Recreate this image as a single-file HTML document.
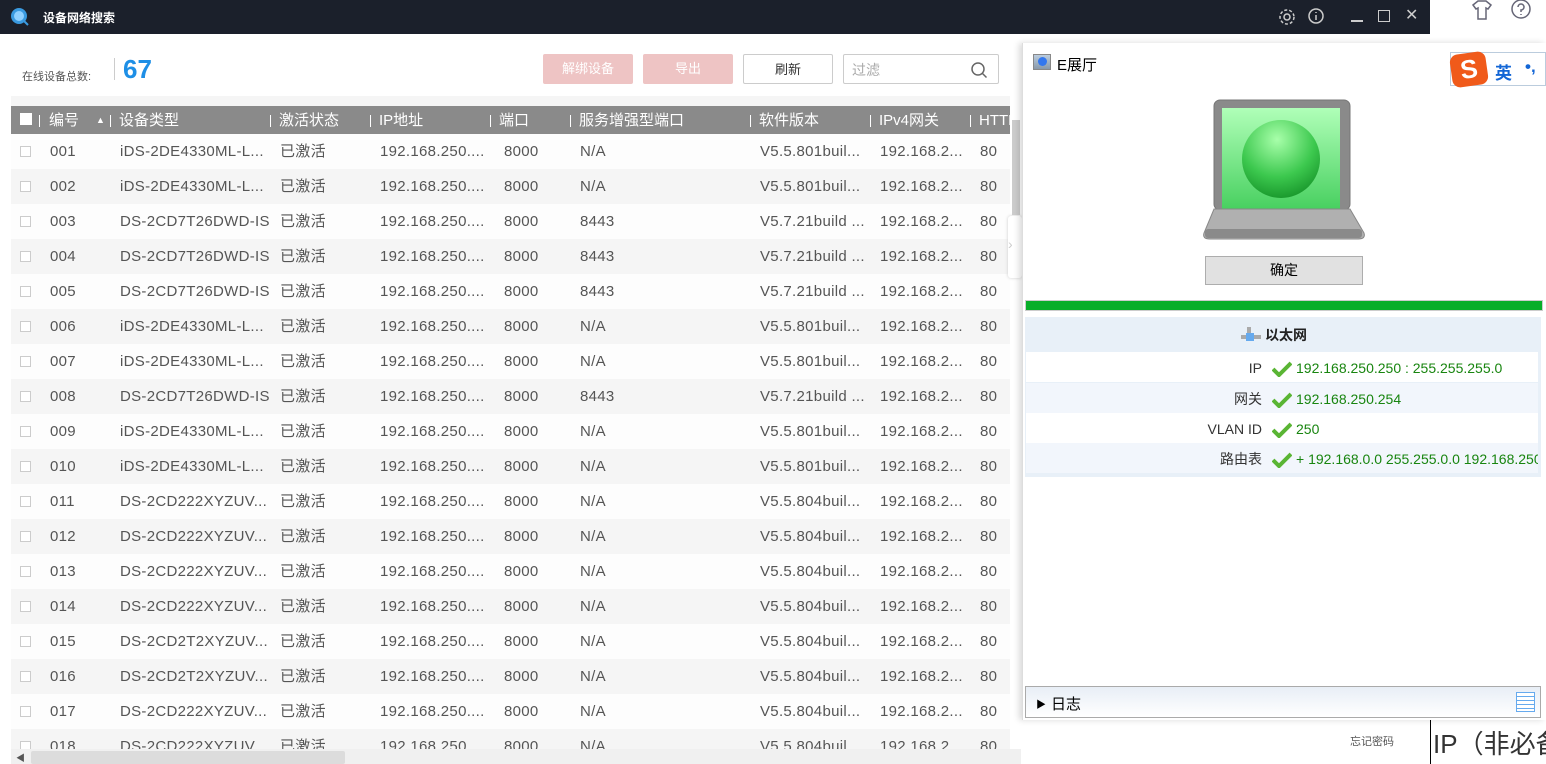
<!DOCTYPE html>
<html><head><meta charset="utf-8"><style>
*{margin:0;padding:0;box-sizing:border-box}
body{width:1546px;height:764px;overflow:hidden;background:#fff;position:relative;font-family:"Liberation Sans","Noto Sans CJK SC",sans-serif;}
.abs{position:absolute}
.title{left:0;top:0;width:1430px;height:34px;background:#1b202b}
.rt{left:1430px;top:0;width:116px;height:44px;background:#fff}
.hdr{left:11px;top:106px;width:999px;height:28px;background:#8a8a8a;color:#fff;font-size:15px}
.hdr span{position:absolute;top:5px;line-height:20px}
.row{position:absolute;left:11px;width:999px;height:35px;font-size:15px;color:#555;letter-spacing:.3px}
.row span{position:absolute;top:8px;line-height:20px;height:20px;white-space:nowrap}
.cb{position:absolute;left:9px;top:12px;width:11px;height:11px;border:1px solid #ccc;background:#fff}
.sep{position:absolute;top:8px;width:1px;height:13px;background:#eee}
.btn{position:absolute;top:54px;height:30px;font-size:13px;text-align:center;line-height:30px;border-radius:2px}
.pop{left:1022px;top:43px;width:524px;height:677px;background:#fff;box-shadow:-3px 0 6px rgba(0,0,0,.15);border-left:1px solid #ddd}
.kv{position:absolute;left:3px;width:512px;height:30px;font-size:14px}
.kv .k{position:absolute;right:276px;top:8px;line-height:16px;color:#333;text-align:right}
.kv .v{position:absolute;left:270px;top:8px;line-height:16px;color:#18850f;white-space:nowrap}
.kv svg{position:absolute;left:246px;top:9px}
</style></head><body>
<div class="abs title">
 <svg class="abs" style="left:10px;top:7px" width="20" height="20"><circle cx="9" cy="9" r="8" fill="#3a9ae0"/><circle cx="9" cy="9" r="5" fill="#8fd0ff"/><path d="M14 14l4 4" stroke="#3a9ae0" stroke-width="2"/></svg>
 <div class="abs" style="left:43px;top:9px;color:#fff;font-size:12px;font-weight:bold">设备网络搜索</div>
 <svg class="abs" style="left:1277px;top:7px" width="20" height="20" fill="none" stroke="#ccc" stroke-width="1.5"><circle cx="10" cy="10" r="3"/><circle cx="10" cy="10" r="7" stroke-dasharray="3 2"/></svg>
 <svg class="abs" style="left:1307px;top:7px" width="18" height="18" fill="none" stroke="#ccc" stroke-width="1.5"><circle cx="9" cy="9" r="7"/><path d="M9 8v5M9 5v1"/></svg>
 <div class="abs" style="left:1351px;top:20px;width:12px;height:1.5px;background:#ccc"></div>
 <div class="abs" style="left:1378px;top:10px;width:12px;height:12px;border:1.5px solid #ccc"></div>
 <div class="abs" style="left:1405px;top:5px;color:#ccc;font-size:16px">✕</div>
</div>
<div class="abs rt">
 <svg class="abs" style="left:40px;top:0" width="24" height="20" fill="none" stroke="#667" stroke-width="1.5"><path d="M3 5l5-4h8l5 4-3 4-2-1v11H8V8L6 9z"/></svg>
 <svg class="abs" style="left:80px;top:0" width="22" height="20" fill="none" stroke="#667" stroke-width="1.5"><circle cx="11" cy="9" r="9"/><path d="M8 7a3 3 0 1 1 3 3v2M11 14v1"/></svg>
</div>
<div class="abs" style="left:22px;top:68px;font-size:11px;color:#555">在线设备总数:</div>
<div class="abs" style="left:114px;top:58px;width:1px;height:22px;background:#ccc"></div>
<div class="abs" style="left:123px;top:54px;font-size:26px;font-weight:bold;color:#1e8fe6">67</div>
<div class="btn" style="left:543px;width:90px;background:#eec4c4;color:#fff">解绑设备</div>
<div class="btn" style="left:643px;width:90px;background:#eec4c4;color:#fff">导出</div>
<div class="btn" style="left:743px;width:90px;border:1px solid #ccc;color:#333">刷新</div>
<div class="btn" style="left:843px;width:156px;border:1px solid #ccc;color:#aaa;text-align:left;padding-left:8px;font-size:14px">过滤
 <svg class="abs" style="right:10px;top:6px" width="18" height="18" fill="none" stroke="#666" stroke-width="1.5"><circle cx="8" cy="8" r="6"/><path d="M12.5 12.5l4 4"/></svg></div>
<div class="abs" style="left:11px;top:96px;width:999px;height:10px;background:#f5f5f5"></div>
<div class="abs hdr">
 <div class="abs" style="left:9px;top:7px;width:12px;height:12px;background:#fff"></div>
 <span class="sep" style="left:28px;background:#fff;top:9px;height:12px"></span><span style="left:38px">编号</span><span style="left:85px;font-size:9px;top:4px">▲</span>
 <span class="sep" style="left:99px;background:#fff;top:9px;height:12px"></span><span style="left:108px">设备类型</span>
 <span class="sep" style="left:259px;background:#fff;top:9px;height:12px"></span><span style="left:268px">激活状态</span>
 <span class="sep" style="left:359px;background:#fff;top:9px;height:12px"></span><span style="left:368px">IP地址</span>
 <span class="sep" style="left:479px;background:#fff;top:9px;height:12px"></span><span style="left:488px">端口</span>
 <span class="sep" style="left:559px;background:#fff;top:9px;height:12px"></span><span style="left:568px">服务增强型端口</span>
 <span class="sep" style="left:739px;background:#fff;top:9px;height:12px"></span><span style="left:748px">软件版本</span>
 <span class="sep" style="left:859px;background:#fff;top:9px;height:12px"></span><span style="left:868px">IPv4网关</span>
 <span class="sep" style="left:959px;background:#fff;top:9px;height:12px"></span><span style="left:968px">HTTP</span>
</div>
<div id="rows"></div>
<script>
var d=[["iDS-2DE4330ML-L...","N/A","V5.5.801buil..."],["iDS-2DE4330ML-L...","N/A","V5.5.801buil..."],["DS-2CD7T26DWD-IS","8443","V5.7.21build ..."],["DS-2CD7T26DWD-IS","8443","V5.7.21build ..."],["DS-2CD7T26DWD-IS","8443","V5.7.21build ..."],["iDS-2DE4330ML-L...","N/A","V5.5.801buil..."],["iDS-2DE4330ML-L...","N/A","V5.5.801buil..."],["DS-2CD7T26DWD-IS","8443","V5.7.21build ..."],["iDS-2DE4330ML-L...","N/A","V5.5.801buil..."],["iDS-2DE4330ML-L...","N/A","V5.5.801buil..."],["DS-2CD222XYZUV...","N/A","V5.5.804buil..."],["DS-2CD222XYZUV...","N/A","V5.5.804buil..."],["DS-2CD222XYZUV...","N/A","V5.5.804buil..."],["DS-2CD222XYZUV...","N/A","V5.5.804buil..."],["DS-2CD2T2XYZUV...","N/A","V5.5.804buil..."],["DS-2CD2T2XYZUV...","N/A","V5.5.804buil..."],["DS-2CD222XYZUV...","N/A","V5.5.804buil..."],["DS-2CD222XYZUV...","N/A","V5.5.804buil..."]];
var h="";d.forEach(function(r,i){var n=("00"+(i+1)).slice(-3);h+='<div class="row" style="top:'+(134+35*i)+'px;background:'+(i%2?'#f5f5f5':'#fdfdfd')+'"><div class="cb"></div><span style="left:39px">'+n+'</span><span style="left:109px">'+r[0]+'</span><span style="left:269px">已激活</span><span style="left:369px">192.168.250....</span><span style="left:493px">8000</span><span style="left:569px">'+r[1]+'</span><span style="left:749px">'+r[2]+'</span><span style="left:869px">192.168.2...</span><span style="left:969px">80</span></div>';});
document.getElementById("rows").innerHTML=h;
</script>
<div class="abs" style="left:11px;top:749px;width:1010px;height:15px;background:#f0f0f0"></div>
<div class="abs" style="left:31px;top:751px;width:314px;height:13px;background:#dcdcdc;border-radius:2px"></div>
<div class="abs" style="left:16px;top:751px;font-size:9px;color:#555">◀</div>
<div class="abs" style="left:1012px;top:120px;width:8px;height:95px;background:#ccc"></div>
<div class="abs" style="left:1008px;top:216px;width:14px;height:62px;background:#fff;border-radius:3px;box-shadow:0 0 3px #ccc;color:#ccc;font-size:14px;padding-top:20px">›</div>
<div class="abs" style="left:1350px;top:733px;font-size:11px;color:#555">忘记密码</div>
<div class="abs" style="left:1430px;top:720px;width:1px;height:44px;background:#000"></div>
<div class="abs" style="left:1433px;top:724px;font-size:26px;color:#333;white-space:nowrap">IP（非必备</div>
<div class="abs pop">
 <div class="abs" style="left:10px;top:11px;width:18px;height:16px;background:linear-gradient(#bcd,#89a);border:1px solid #888"><div style="margin:2px 4px;width:9px;height:9px;border-radius:50%;background:#37e"></div></div>
 <div class="abs" style="left:34px;top:11px;font-size:15px;color:#000">E展厅</div>
 <svg class="abs" style="left:180px;top:56px" width="162" height="142"><rect x="11" y="1" width="136" height="110" rx="6" fill="#8a8a8a" stroke="#777"/><defs><linearGradient id="s" x1="0" y1="0" x2="0" y2="1"><stop offset="0" stop-color="#b0ffb8"/><stop offset="1" stop-color="#48d060"/></linearGradient><radialGradient id="b" cx=".45" cy=".25" r=".8"><stop offset="0" stop-color="#a8ffaa"/><stop offset=".6" stop-color="#3cc84e"/><stop offset="1" stop-color="#159228"/></radialGradient></defs><rect x="19" y="9" width="118" height="101" fill="url(#s)"/><circle cx="78" cy="60" r="39" fill="url(#b)"/><path d="M11 110h136l14 24q2 6-6 6H7q-8 0-6-6z" fill="#b0b0b0" stroke="#888"/><rect x="2" y="130" width="157" height="9" rx="3" fill="#8a8a8a"/></svg>
 <div class="abs" style="left:182px;top:213px;width:158px;height:29px;background:#e1e1e1;border:1px solid #adadad;text-align:center;line-height:27px;font-size:14px;color:#000">确定</div>
 <div class="abs" style="left:2px;top:257px;width:518px;height:11px;background:#08ae29;border:1px solid #ccc"></div>
 <div class="abs" style="left:2px;top:274px;width:516px;height:160px;background:#e8f0f8">
  <svg class="abs" style="left:216px;top:10px" width="22" height="16"><rect x="0" y="8" width="20" height="4" fill="#aaa"/><rect x="6" y="0" width="4" height="10" fill="#aaa"/><rect x="5" y="6" width="8" height="8" fill="#6ae"/></svg>
  <div class="abs" style="left:240px;top:8px;font-size:14px;font-weight:bold;color:#222">以太网</div>
 </div>
 <div class="kv" style="top:309px;background:#fff"><span class="k">IP</span><svg width="20" height="16"><path d="M1 8l6 6L19 2" stroke="#5ab534" stroke-width="4" fill="none"/></svg><span class="v">192.168.250.250 : 255.255.255.0</span></div>
 <div class="kv" style="top:340px;background:#f2f6fc"><span class="k">网关</span><svg width="20" height="16"><path d="M1 8l6 6L19 2" stroke="#5ab534" stroke-width="4" fill="none"/></svg><span class="v">192.168.250.254</span></div>
 <div class="kv" style="top:370px;background:#fff"><span class="k">VLAN ID</span><svg width="20" height="16"><path d="M1 8l6 6L19 2" stroke="#5ab534" stroke-width="4" fill="none"/></svg><span class="v">250</span></div>
 <div class="kv" style="top:400px;background:#f2f6fc;overflow:hidden"><span class="k">路由表</span><svg width="20" height="16"><path d="M1 8l6 6L19 2" stroke="#5ab534" stroke-width="4" fill="none"/></svg><span class="v">+ 192.168.0.0 255.255.0.0 192.168.250.254</span></div>
 <div class="abs" style="left:2px;top:643px;width:516px;height:32px;border:1px solid #aaa;background:linear-gradient(#e8eef6,#fff)">
  <div class="abs" style="left:10px;top:9px;font-size:10px">▶</div>
  <div class="abs" style="left:25px;top:6px;font-size:15px;color:#000">日志</div>
  <div class="abs" style="left:490px;top:5px;width:19px;height:20px;border:1px solid #6ae;background:repeating-linear-gradient(#fff 0 3px,#6ae 3px 4px)"></div>
 </div>
</div>
<div class="abs" style="left:1450px;top:52px;width:96px;height:34px;background:#fff;border:1px solid #bcd">
 <div class="abs" style="left:0;top:0;width:36px;height:33px;background:#f05a1a;border-radius:8px;transform:rotate(-8deg);color:#fff;font-weight:bold;font-size:26px;text-align:center;line-height:33px">S</div>
 <div class="abs" style="left:44px;top:6px;color:#1366d6;font-weight:bold;font-size:17px">英</div>
 <div class="abs" style="left:74px;top:4px;color:#1366d6;font-weight:bold;font-size:17px">•,</div>
</div>
</body></html>
